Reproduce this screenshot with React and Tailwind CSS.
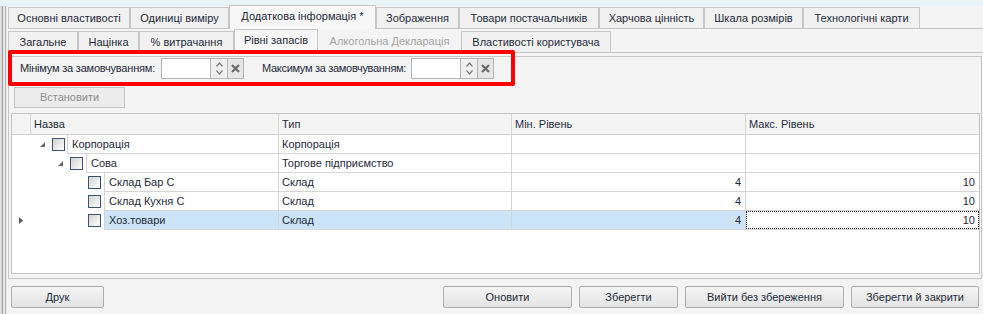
import React from "react";

const tabs1 = [
  ["Основні властивості", "w-[122px]", false],
  ["Одиниці виміру", "w-[99px]", false],
  ["Додаткова інформація *", "w-[147px]", true],
  ["Зображення", "w-[83px]", false],
  ["Товари постачальників", "w-[140px]", false],
  ["Харчова цінність", "w-[105px]", false],
  ["Шкала розмірів", "w-[99px]", false],
  ["Технологічні карти", "w-[117px]", false],
];

const tabs2 = [
  ["Загальне", "w-[70px]", "n"],
  ["Націнка", "w-[61px]", "n"],
  ["% витрачання", "w-[95px]", "n"],
  ["Рівні запасів", "w-[84px]", "a"],
  ["Алкогольна Декларація", "w-[143px]", "d"],
  ["Властивості користувача", "w-[150px]", "n"],
];

function Tab({ label, w, state }) {
  if (state === "a") {
    return (
      <div className={`${w} h-[24px] mb-[-1px] shrink-0 flex items-center justify-center pb-[2px] bg-[#f7f7f7] border-t border-l border-r border-[#c6c6c6] relative`}>
        {label}
      </div>
    );
  }
  if (state === "d") {
    return (
      <div className={`${w} h-[21px] shrink-0 flex items-center justify-center text-[#a3a3a3]`}>
        {label}
      </div>
    );
  }
  return (
    <div className={`${w} h-[21px] shrink-0 flex items-center justify-center bg-[#f1f1f1] border-t border-l border-r border-[#c6c6c6]`}>
      {label}
    </div>
  );
}

function Spin() {
  return (
    <div className="flex h-[21px]">
      <div className="w-[50px] h-[21px] bg-white border border-[#b4b4b4]" />
      <div className="w-[16px] h-[21px] bg-[#f0f0f0] border-t border-b border-[#b4b4b4] flex flex-col items-center justify-center gap-[3px]">
        <svg width="7" height="5" viewBox="0 0 7 5"><path d="M0.5 4.5 L3.5 1 L6.5 4.5" fill="none" stroke="#7a7a7a" strokeWidth="1.2" /></svg>
        <svg width="7" height="5" viewBox="0 0 7 5"><path d="M0.5 0.5 L3.5 4 L6.5 0.5" fill="none" stroke="#7a7a7a" strokeWidth="1.2" /></svg>
      </div>
      <div className="w-[17px] h-[21px] bg-[#e6e6e6] border border-[#b4b4b4] flex items-center justify-center">
        <svg width="9" height="9" viewBox="0 0 9 9"><path d="M1 1 L8 8 M8 1 L1 8" stroke="#6a6a6a" strokeWidth="2.2" /></svg>
      </div>
    </div>
  );
}

function Check() {
  return <div className="w-[13px] h-[13px] shrink-0 border border-[#3d5470] bg-gradient-to-br from-[#d2d2d2] to-white" />;
}

function Arrow() {
  return (
    <svg width="5" height="5" viewBox="0 0 5 5" className="shrink-0">
      <polygon points="5,0 5,5 0,5" fill="#6c6c6c" />
    </svg>
  );
}

const rows = [
  { lvl: 0, name: "Корпорація", type: "Корпорація", min: "", max: "" },
  { lvl: 1, name: "Сова", type: "Торгове підприємство", min: "", max: "" },
  { lvl: 2, name: "Склад Бар С", type: "Склад", min: "4", max: "10" },
  { lvl: 2, name: "Склад Кухня С", type: "Склад", min: "4", max: "10" },
  { lvl: 2, name: "Хоз.товари", type: "Склад", min: "4", max: "10", sel: true },
];

function Row({ r }) {
  const sel = r.sel;
  const cellBg = sel ? "bg-[#cce4f7]" : "bg-white";
  let indent;
  if (r.lvl === 0) {
    indent = (
      <div className="w-[36px] shrink-0 flex items-center pl-[9px]">
        <Arrow />
        <div className="ml-[7px]"><Check /></div>
      </div>
    );
  } else if (r.lvl === 1) {
    indent = (
      <div className="w-[55px] shrink-0 flex items-center pl-[27px]">
        <Arrow />
        <div className="ml-[7px]"><Check /></div>
      </div>
    );
  } else {
    indent = (
      <div className="w-[73px] shrink-0 flex items-center pl-[57px]">
        <Check />
      </div>
    );
  }
  return (
    <div className="flex h-[19px]">
      <div className="w-[19px] shrink-0 flex items-center pl-[7px]">
        {sel && (
          <svg width="4" height="7" viewBox="0 0 4 7"><polygon points="0,0 4,3.5 0,7" fill="#5a5a5a" /></svg>
        )}
      </div>
      <div className="w-[247px] shrink-0 flex">
        {indent}
        <div className={`flex-1 border-l border-b border-[#d5d5d5] pl-[4px] flex items-center ${cellBg}`}>{r.name}</div>
      </div>
      <div className={`w-[233px] shrink-0 border-l border-b border-[#d5d5d5] pl-[3px] flex items-center ${cellBg}`}>{r.type}</div>
      <div className={`w-[234px] shrink-0 border-l border-b border-[#d5d5d5] pr-[4px] flex items-center justify-end ${cellBg}`}>{r.min}</div>
      {sel ? (
        <div className="flex-1 border-l border-b border-[#d5d5d5] bg-white">
          <div className="h-full border border-dotted border-[#222] pr-[3px] flex items-center justify-end">{r.max}</div>
        </div>
      ) : (
        <div className="flex-1 border-l border-b border-[#d5d5d5] pr-[4px] flex items-center justify-end bg-white">{r.max}</div>
      )}
    </div>
  );
}

function Btn({ children, w }) {
  return (
    <div className={`${w} h-[22px] shrink-0 border border-[#adadad] rounded-[2px] bg-gradient-to-b from-[#f4f4f4] to-[#e4e4e4] flex items-center justify-center`}>
      {children}
    </div>
  );
}

export default function App() {
  return (
    <div className="w-[983px] h-[314px] overflow-hidden flex bg-[#f4f4f4] text-[11px] leading-none text-[#1e2a3a] font-['Liberation_Sans',Arial,sans-serif] relative">
      <div className="w-[8px] h-full flex shrink-0">
        <div className="w-[2px] bg-[#dedede]" />
        <div className="w-[1px] bg-[#9c9c9c]" />
        <div className="w-[2px] bg-[#e8e8e8]" />
        <div className="w-[1px] bg-[#acacac]" />
        <div className="w-[2px] bg-[#f0f0f0]" />
      </div>
      <div className="flex-1 flex flex-col">
        <div className="h-[6px] bg-[#e8f4f6] -ml-[8px]" />
        <div className="h-[23px] flex items-end border-b border-[#c6c6c6]">
          {tabs1.map(([l, w, a]) => (
            <Tab key={l} label={l} w={w} state={a ? "a" : "n"} />
          ))}
        </div>
        <div className="h-[24px] flex items-end border-b border-[#c6c6c6]">
          {tabs2.map(([l, w, s]) => (
            <Tab key={l} label={l} w={w} state={s} />
          ))}
        </div>
        <div className="mt-[3px] mr-[1px] h-[223px] border border-[#c6c6c6] flex flex-col pl-[2px] pr-[1px]">
          <div className="mt-[1px] h-[21px] flex items-center pl-[9px]">
            <span className="w-[135px] shrink-0 whitespace-nowrap tracking-[-0.2px]">Мінімум за замовчуванням:</span>
            <div className="ml-[6px]"><Spin /></div>
            <span className="ml-[18px] w-[144px] shrink-0 whitespace-nowrap tracking-[-0.3px]">Максимум за замовчуванням:</span>
            <div className="ml-[5px]"><Spin /></div>
          </div>
          <div className="mt-[8px] ml-[3px] w-[111px] h-[21px] border border-[#c2c2c2] bg-[#ececec] text-[#8e8e8e] flex items-center justify-center">
            Встановити
          </div>
          <div className="mt-[5px] mb-[4px] flex-1 border border-[#c4c4c4] bg-white flex flex-col">
            <div className="h-[21px] flex border-b border-[#d0d0d0] bg-[#f4f4f4]">
              <div className="w-[19px] shrink-0 border-r border-[#d5d5d5]" />
              <div className="w-[247px] shrink-0 pl-[3px] flex items-center">Назва</div>
              <div className="w-[233px] shrink-0 border-l border-[#d5d5d5] pl-[3px] flex items-center">Тип</div>
              <div className="w-[234px] shrink-0 border-l border-[#d5d5d5] pl-[3px] flex items-center">Мін. Рівень</div>
              <div className="flex-1 border-l border-[#d5d5d5] pl-[3px] flex items-center">Макс. Рівень</div>
            </div>
            {rows.map((r) => (
              <Row key={r.name} r={r} />
            ))}
          </div>
        </div>
        <div className="mt-[7px] flex items-center pr-[4px] pl-[3px]">
          <Btn w="w-[93px]">Друк</Btn>
          <div className="flex-1" />
          <div className="flex gap-[7px]">
            <Btn w="w-[129px]">Оновити</Btn>
            <Btn w="w-[99px]">Зберегти</Btn>
            <Btn w="w-[159px]">Вийти без збереження</Btn>
            <Btn w="w-[128px]">Зберегти й закрити</Btn>
          </div>
        </div>
      </div>
      <div className="absolute left-[8px] top-[50px] w-[507px] h-[36px] border-[4px] border-[#ff0000] rounded-[2px]" />
    </div>
  );
}
